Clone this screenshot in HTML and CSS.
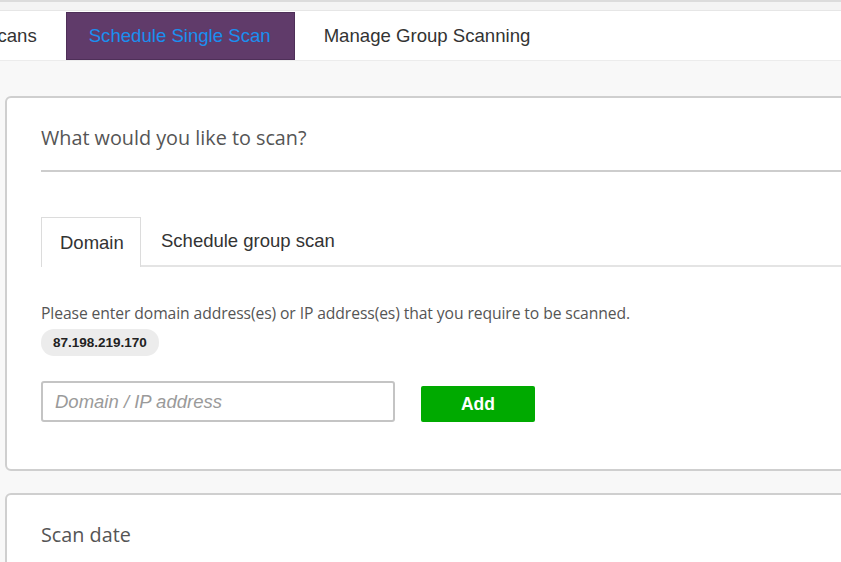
FILE: index.html
```html
<!DOCTYPE html>
<html>
<head>
<meta charset="utf-8">
<link rel="stylesheet" href="styles.css">
</head>
<body>
<div class="topstrip"></div>
<nav class="nav">
  <div class="nav-inner">
    <a class="nav-tab">Scans</a>
    <a class="nav-tab active">Schedule Single Scan</a>
    <a class="nav-tab">Manage Group Scanning</a>
  </div>
</nav>
<main class="content">
  <section class="card">
    <h2 class="card-title">What would you like to scan?</h2>
    <div class="divider"></div>
    <div class="tabs">
      <div class="tab active">Domain</div>
      <div class="tab">Schedule group scan</div>
    </div>
    <p class="desc">Please enter domain address(es) or IP address(es) that you require to be scanned.</p>
    <span class="chip">87.198.219.170</span>
    <div class="add-row">
      <input class="field" type="text" placeholder="Domain / IP address">
      <button class="btn-add">Add</button>
    </div>
  </section>
  <section class="card card2">
    <h2 class="card-title small">Scan date</h2>
  </section>
</main>
</body>
</html>
```
FILE: styles.css
```css
html, body {
  margin: 0;
  padding: 0;
}
body {
  background: #f8f8f8;
  width: 841px;
  height: 562px;
  overflow: hidden;
  font-family: "Liberation Sans", Arial, sans-serif;
}
.topstrip {
  height: 8px;
  border-top: 2px solid #dcdcdc;
  background: #f4f4f4;
}
.nav {
  background: #fff;
  border-top: 1px solid #e6e6e6;
  border-bottom: 1px solid #ececec;
  height: 49px;
  overflow: hidden;
}
.nav-inner {
  display: flex;
  gap: 6px;
  margin-left: -38px;
  height: 100%;
}
.nav-tab {
  display: flex;
  align-items: center;
  padding: 0 23px;
  font-size: 18.6px;
  color: #333;
  height: 49px;
  box-sizing: border-box;
}
.nav-tab.active {
  background: #603b6a;
  color: #1a8ff0;
  border: 1px solid #4e2f58;
  padding: 0 23px 0 22px;
  margin-top: 1px;
  height: 48px;
}
.content {
  padding: 35px 0 0 5px;
}
.card {
  width: 900px;
  background: #fff;
  border: 2px solid #cfcfcf;
  border-radius: 6px;
  box-sizing: border-box;
  padding: 21px 0 0 34px;
  height: 375px;
}
.card2 {
  margin-top: 22px;
  height: 120px;
}
.card-title {
  margin: 0;
  font-family: "Open Sans", sans-serif;
  font-weight: 400;
  font-size: 19.8px;
  color: #555;
  height: 37px;
  line-height: 37px;
}
.divider {
  margin-top: 14px;
  height: 2px;
  background: #cdcdcd;
}
.tabs {
  margin-top: 45px;
  display: flex;
  border-bottom: 2px solid #e4e4e4;
  height: 48px;
}
.tab {
  display: flex;
  align-items: center;
  padding: 0 19px 0 20px;
  font-size: 18.5px;
  color: #333;
}
.tab.active {
  border: 1px solid #dcdcdc;
  border-bottom: none;
  background: #fff;
  margin-bottom: -2px;
  width: 100px;
  box-sizing: border-box;
  padding: 0 0 0 18px;
}
.desc {
  margin: 37px 0 0;
  font-family: "Open Sans", sans-serif;
  font-size: 15.7px;
  color: #555;
  line-height: 19px;
  letter-spacing: -0.1px;
}
.chip {
  display: inline-block;
  margin-top: 6px;
  background: #ececec;
  border-radius: 13px;
  padding: 0 12px;
  height: 27px;
  line-height: 27px;
  font-size: 13.5px;
  font-weight: bold;
  color: #222;
}
.add-row {
  display: flex;
  align-items: flex-start;
  gap: 26px;
  margin-top: 25px;
}
.field {
  width: 354px;
  height: 41px;
  box-sizing: border-box;
  border: 2px solid #c4c4c4;
  border-radius: 3px;
  padding: 0 12px;
  font-size: 18.5px;
  font-family: "Liberation Sans", Arial, sans-serif;
  outline: none;
  background: #fff;
}
.field::placeholder {
  color: #9a9a9a;
  font-style: italic;
}
.btn-add {
  margin-top: 5px;
  width: 114px;
  height: 36px;
  border: none;
  border-radius: 2px;
  background: #00aa00;
  color: #fff;
  font-weight: bold;
  font-size: 17.5px;
  font-family: "Liberation Sans", Arial, sans-serif;
}
```
